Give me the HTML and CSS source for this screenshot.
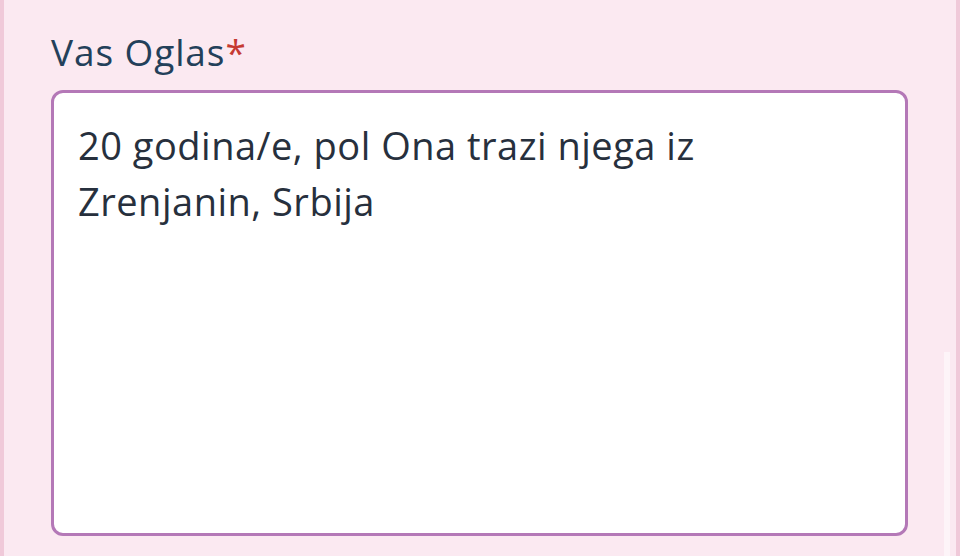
FILE: index.html
```html
<!DOCTYPE html>
<html lang="sr">
<head>
<meta charset="utf-8">
<title>Vas Oglas</title>
<link rel="stylesheet" href="styles.css">
</head>
<body>
<div class="page">
  <div class="field">
    <label class="label" for="oglas">Vas Oglas<span class="req">*</span></label>
    <textarea id="oglas" class="ad-text">20 godina/e, pol Ona trazi njega iz Zrenjanin, Srbija</textarea>
  </div>
  <div class="scroll-thumb"></div>
</div>
</body>
</html>
```
FILE: styles.css
```css
html, body {
  margin: 0;
  padding: 0;
}
body {
  width: 960px;
  height: 556px;
  overflow: hidden;
  background: #fbe9f1;
  font-family: "Open Sans", "Noto Sans", sans-serif;
}
.page {
  position: relative;
  box-sizing: border-box;
  width: 960px;
  height: 556px;
  border-left: 4px solid #f0c9d9;
  border-right: 4px solid #f0c9d9;
  padding: 27px 0 0 47px;
}
.field {
  display: flex;
  flex-direction: column;
  gap: 14px;
  width: 857px;
}
.label {
  font-size: 37px;
  line-height: 49px;
  letter-spacing: 0.9px;
  color: #23405a;
}
.req {
  color: #c63a32;
}
.ad-text {
  box-sizing: border-box;
  width: 857px;
  height: 446px;
  margin: 0;
  border: 3px solid #b478b7;
  border-radius: 12px;
  background: #ffffff;
  padding: 24px 60px 24px 24px;
  font-family: "Open Sans", "Noto Sans", sans-serif;
  font-size: 38px;
  line-height: 56px;
  letter-spacing: 0.5px;
  color: #27303d;
  resize: none;
  outline: none;
  overflow: hidden;
}
.scroll-thumb {
  position: absolute;
  right: 6px;
  top: 352px;
  width: 6px;
  bottom: 0;
  background: #fdf4f8;
}
```
